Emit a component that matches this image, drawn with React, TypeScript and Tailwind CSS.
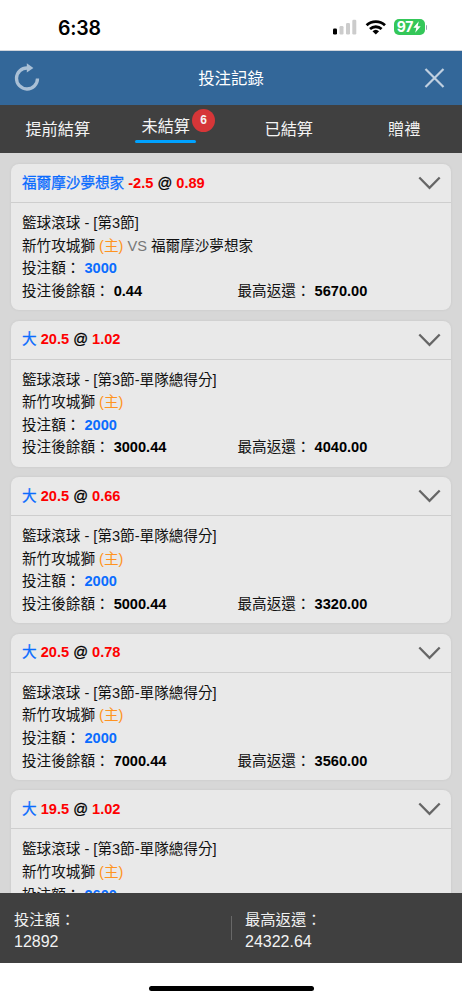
import { useState } from 'react';
import clsx from 'clsx';

interface Bet {
  id: number;
  pick: string;
  line: string;
  odds: string;
  market: string;
  home: string;
  away?: string;
  stake: string;
  balance?: string;
  maxReturn?: string;
}

const TABS = [
  { label: '提前結算' },
  { label: '未結算', count: 6 },
  { label: '已結算' },
  { label: '贈禮' },
];

const BETS: Bet[] = [
  { id: 1, pick: '福爾摩沙夢想家', line: '-2.5', odds: '0.89', market: '籃球滾球 - [第3節]', home: '新竹攻城獅', away: '福爾摩沙夢想家', stake: '3000', balance: '0.44', maxReturn: '5670.00' },
  { id: 2, pick: '大', line: '20.5', odds: '1.02', market: '籃球滾球 - [第3節-單隊總得分]', home: '新竹攻城獅', stake: '2000', balance: '3000.44', maxReturn: '4040.00' },
  { id: 3, pick: '大', line: '20.5', odds: '0.66', market: '籃球滾球 - [第3節-單隊總得分]', home: '新竹攻城獅', stake: '2000', balance: '5000.44', maxReturn: '3320.00' },
  { id: 4, pick: '大', line: '20.5', odds: '0.78', market: '籃球滾球 - [第3節-單隊總得分]', home: '新竹攻城獅', stake: '2000', balance: '7000.44', maxReturn: '3560.00' },
  { id: 5, pick: '大', line: '19.5', odds: '1.02', market: '籃球滾球 - [第3節-單隊總得分]', home: '新竹攻城獅', stake: '2600' },
];

function StatusBar() {
  return (
    <div className="flex h-[51px] shrink-0 items-start justify-between border-b border-gray-300 bg-white pt-[17px] pr-[35px] pl-[58px]">
      <span className="font-['Inter'] text-[19.5px] leading-[22px] font-semibold tracking-[-0.2px] text-black">6:38</span>
      <div className="flex items-center pt-0.5">
        {/* Signal */}
        <svg width="24" height="16" viewBox="0 0 24 16" className="mr-2">
          <rect x="0" y="9.5" width="4" height="6" rx="1.2" fill="#000" />
          <rect x="6.5" y="7" width="4" height="8.5" rx="1.2" fill="#ccc" />
          <rect x="13" y="4" width="4" height="11.5" rx="1.2" fill="#ccc" />
          <rect x="19.3" y="0.7" width="4" height="14.8" rx="1.2" fill="#ccc" />
        </svg>
        {/* Wifi */}
        <svg width="22" height="16" viewBox="0 0 22 16" fill="none" stroke="#000" strokeWidth="2.8" className="mr-[7px]">
          <path d="M1.6 6.2 A13.6 13.6 0 0 1 20 6.2" />
          <path d="M5 10 A8.6 8.6 0 0 1 16.6 10" />
          <path d="M10.8 15.4 L7.5 12.2 A4.8 4.8 0 0 1 14.1 12.2 Z" fill="#000" stroke="none" />
        </svg>
        {/* Battery */}
        <div className="flex h-4 w-[31px] items-center justify-center rounded-[5px] bg-[#34c759]">
          <span className="font-['Inter'] text-[14px] leading-4 font-bold tracking-[-0.2px] text-white">97</span>
          <svg width="8" height="12" viewBox="0 0 8 12" fill="#fff">
            <path d="M5.8 0.2 L0.3 6.8 H3.3 L2.2 11.8 L7.7 5.2 H4.7 Z" />
          </svg>
        </div>
        <div className="ml-px h-[5px] w-[1.5px] rounded-r bg-gray-400" />
      </div>
    </div>
  );
}

function BetCard({ bet }: { bet: Bet }) {
  return (
    <div className="h-[146px] shrink-0 rounded-[8px] bg-[#e9e9e9] text-[14.6px] text-[#111] shadow-[0_0_3px_rgba(0,0,0,0.07)]">
      {/* Selection */}
      <div className="flex h-[39px] items-center justify-between border-b border-[#cecece] pr-2.5 pl-[11px]">
        <div className="pt-px font-bold whitespace-pre">
          <span className="font-normal text-[#0a6cff] [-webkit-text-stroke:0.3px_#0a6cff]">{bet.pick}</span>
          <span className="text-[#fe0000]"> {bet.line}</span>
          <span className="font-normal text-black [-webkit-text-stroke:0.3px_#000]"> @ </span>
          <span className="text-[#fe0000]">{bet.odds}</span>
        </div>
        <svg width="23" height="14" viewBox="0 0 23 14" fill="none" stroke="#666" strokeWidth="2.3">
          <path d="M1.3 1.5 L11.5 11.8 L21.7 1.5" />
        </svg>
      </div>

      {/* Details */}
      <div className="pt-[9px] pl-[11px] leading-[22.6px] whitespace-nowrap">
        <p>{bet.market}</p>
        <p>
          {bet.home} <span className="text-[#ff9320]">(主)</span>
          {bet.away && (
            <>
              <span className="text-[#777]"> VS </span>
              {bet.away}
            </>
          )}
        </p>
        <p>投注額： <b className="text-[#0a6cff]">{bet.stake}</b></p>
        {bet.balance && (
          <div className="flex">
            <p className="w-[215.5px]">投注後餘額： <b className="text-black">{bet.balance}</b></p>
            <p>最高返還： <b className="text-black">{bet.maxReturn}</b></p>
          </div>
        )}
      </div>
    </div>
  );
}

export default function App() {
  const [activeTab, setActiveTab] = useState(1);

  return (
    <div className="flex h-[1000px] w-[462px] flex-col overflow-hidden bg-white font-['Liberation_Sans','Noto_Sans_CJK_TC',sans-serif]">
      <StatusBar />

      {/* Header */}
      <header className="flex h-[54px] shrink-0 items-center justify-between bg-[#336799] pr-[17px] pl-[14px]">
        <button className="pb-[3px]">
          <svg width="27" height="28" viewBox="0 0 27 28" fill="none" stroke="#aac0d6" strokeWidth="3.3">
            <path d="M13.5 5 A10.5 10.5 0 1 0 23.5 15.5" />
            <path d="M12.8 0.2 L19.4 4.9 L12.8 9.6 Z" fill="#aac0d6" stroke="none" />
          </svg>
        </button>
        <h1 className="mr-[3px] text-[16.4px] text-white">投注記錄</h1>
        <button>
          <svg width="21" height="20" viewBox="0 0 21 20" fill="none" stroke="#c0d0e0" strokeWidth="2.2">
            <path d="M1.5 1 L19.5 19 M19.5 1 L1.5 19" />
          </svg>
        </button>
      </header>

      {/* Tabs */}
      <nav className="grid h-12 shrink-0 grid-cols-4 bg-[#404040] text-[16.2px] text-[#f4f4f4]">
        {TABS.map((tab, i) => (
          <button key={tab.label} onClick={() => setActiveTab(i)} className="flex items-center justify-center">
            <span className={clsx('relative', activeTab === i && 'mr-[15px] mb-[3px] px-[6px] pb-[3.5px] leading-[28px]')}>
              {tab.label}
              {activeTab === i && (
                <span className="absolute inset-x-0 bottom-0 h-[3.5px] rounded-[1.5px] bg-[#00a2ff]" />
              )}
              {tab.count && (
                <span className="absolute -top-[3px] -right-[19px] flex h-[23px] w-[23px] items-center justify-center rounded-full bg-[#d63638] text-xs font-bold">
                  {tab.count}
                </span>
              )}
            </span>
          </button>
        ))}
      </nav>

      {/* Bet list */}
      <main className="flex min-h-0 flex-1 flex-col gap-[10.6px] overflow-hidden bg-[#d7d7d7] px-[11px] pt-[11px]">
        {BETS.map((bet) => (
          <BetCard key={bet.id} bet={bet} />
        ))}
      </main>

      {/* Totals */}
      <footer className="flex h-[70px] shrink-0 items-center bg-[#404040] leading-[22.5px] text-[#f2f2f2]">
        <div className="w-[231px] pt-[6px] pl-[14px]">
          <p className="text-[15.3px]">投注額：</p>
          <p className="text-base leading-[22.5px]">12892</p>
        </div>
        <div className="h-6 w-px bg-[#686868]" />
        <div className="pt-[6px] pl-[13px]">
          <p className="text-[15.3px]">最高返還：</p>
          <p className="text-base leading-[22.5px]">24322.64</p>
        </div>
      </footer>

      {/* Home indicator */}
      <div className="flex h-[37px] shrink-0 justify-center pt-[23px]">
        <div className="h-[5px] w-[165px] rounded-full bg-black" />
      </div>
    </div>
  );
}
